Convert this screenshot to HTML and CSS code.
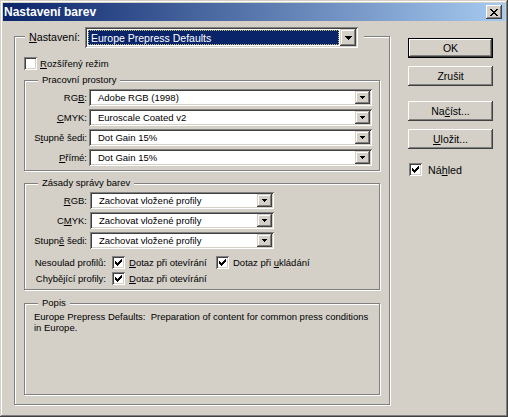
FILE: index.html
```html
<!DOCTYPE html>
<html lang="cs">
<head>
<meta charset="utf-8">
<title>Nastavení barev</title>
<link rel="stylesheet" href="styles.css">
</head>
<body>
<div class="window">
  <div class="titlebar">
    <span class="title">Nastavení barev</span>
    <span class="close"><svg width="8" height="7" viewBox="0 0 8 7" shape-rendering="crispEdges"><path d="M0 0h2v1h-2z M6 0h2v1h-2z M1 1h2v1h-2z M5 1h2v1h-2z M2 2h4v1h-4z M3 3h2v1h-2z M2 4h4v1h-4z M1 5h2v1h-2z M5 5h2v1h-2z M0 6h2v1h-2z M6 6h2v1h-2z" fill="#000"/></svg></span>
  </div>
  <div class="content">
    <fieldset class="main">
      <legend class="main-legend">
        <div class="legend-row">
          <span class="main-label"><u>N</u>astavení:</span>
          <div class="combo big">
            <span class="val"><span class="sel">Europe Prepress Defaults</span></span>
            <span class="drop"><svg width="7" height="4" viewBox="0 0 7 4" shape-rendering="crispEdges"><path d="M0 0h7v1h-7z M1 1h5v1h-5z M2 2h3v1h-3z M3 3h1v1h-1z" fill="#000"/></svg></span>
          </div>
        </div>
      </legend>

      <div class="check adv"><span class="box"></span><span><u>R</u>ozšířený režim</span></div>

      <fieldset class="group work">
        <legend>Pracovní prostory</legend>
        <div class="rows">
          <div class="row"><span class="lbl">RG<u>B</u>:</span><div class="combo"><span class="val">Adobe RGB (1998)</span><span class="drop"><svg width="5" height="3" viewBox="0 0 5 3" shape-rendering="crispEdges"><path d="M0 0h5v1h-5z M1 1h3v1h-3z M2 2h1v1h-1z" fill="#000"/></svg></span></div></div>
          <div class="row"><span class="lbl"><u>C</u>MYK:</span><div class="combo"><span class="val">Euroscale Coated v2</span><span class="drop"><svg width="5" height="3" viewBox="0 0 5 3" shape-rendering="crispEdges"><path d="M0 0h5v1h-5z M1 1h3v1h-3z M2 2h1v1h-1z" fill="#000"/></svg></span></div></div>
          <div class="row"><span class="lbl">S<u>t</u>upně šedi:</span><div class="combo"><span class="val">Dot Gain 15%</span><span class="drop"><svg width="5" height="3" viewBox="0 0 5 3" shape-rendering="crispEdges"><path d="M0 0h5v1h-5z M1 1h3v1h-3z M2 2h1v1h-1z" fill="#000"/></svg></span></div></div>
          <div class="row"><span class="lbl"><u>P</u>římé:</span><div class="combo"><span class="val">Dot Gain 15%</span><span class="drop"><svg width="5" height="3" viewBox="0 0 5 3" shape-rendering="crispEdges"><path d="M0 0h5v1h-5z M1 1h3v1h-3z M2 2h1v1h-1z" fill="#000"/></svg></span></div></div>
        </div>
      </fieldset>

      <fieldset class="group policy">
        <legend>Zásady správy barev</legend>
        <div class="rows">
          <div class="row"><span class="lbl"><u>R</u>GB:</span><div class="combo"><span class="val">Zachovat vložené profily</span><span class="drop"><svg width="5" height="3" viewBox="0 0 5 3" shape-rendering="crispEdges"><path d="M0 0h5v1h-5z M1 1h3v1h-3z M2 2h1v1h-1z" fill="#000"/></svg></span></div></div>
          <div class="row"><span class="lbl">C<u>M</u>YK:</span><div class="combo"><span class="val">Zachovat vložené profily</span><span class="drop"><svg width="5" height="3" viewBox="0 0 5 3" shape-rendering="crispEdges"><path d="M0 0h5v1h-5z M1 1h3v1h-3z M2 2h1v1h-1z" fill="#000"/></svg></span></div></div>
          <div class="row"><span class="lbl">Stupn<u>ě</u> šedi:</span><div class="combo"><span class="val">Zachovat vložené profily</span><span class="drop"><svg width="5" height="3" viewBox="0 0 5 3" shape-rendering="crispEdges"><path d="M0 0h5v1h-5z M1 1h3v1h-3z M2 2h1v1h-1z" fill="#000"/></svg></span></div></div>
        </div>
        <div class="crows">
          <div class="crow">
            <span class="clbl">Nesoulad profilů:</span>
            <span class="opt"><span class="box on"><svg width="7" height="7" viewBox="0 0 7 7" shape-rendering="crispEdges"><path d="M0 2h1v3h-1z M1 3h1v3h-1z M2 4h1v3h-1z M3 3h1v3h-1z M4 2h1v3h-1z M5 1h1v3h-1z M6 0h1v3h-1z" fill="#000"/></svg></span><span><u>D</u>otaz při otevírání</span></span>
            <span class="opt"><span class="box on"><svg width="7" height="7" viewBox="0 0 7 7" shape-rendering="crispEdges"><path d="M0 2h1v3h-1z M1 3h1v3h-1z M2 4h1v3h-1z M3 3h1v3h-1z M4 2h1v3h-1z M5 1h1v3h-1z M6 0h1v3h-1z" fill="#000"/></svg></span><span>Dotaz při <u>u</u>kládání</span></span>
          </div>
          <div class="crow">
            <span class="clbl">Chybějící profily:</span>
            <span class="opt"><span class="box on"><svg width="7" height="7" viewBox="0 0 7 7" shape-rendering="crispEdges"><path d="M0 2h1v3h-1z M1 3h1v3h-1z M2 4h1v3h-1z M3 3h1v3h-1z M4 2h1v3h-1z M5 1h1v3h-1z M6 0h1v3h-1z" fill="#000"/></svg></span><span><u>D</u>otaz při otevírání</span></span>
          </div>
        </div>
      </fieldset>

      <fieldset class="group desc">
        <legend>Popis</legend>
        <p class="desc-text">Europe Prepress Defaults:&nbsp; Preparation of content for common press conditions in Europe.</p>
      </fieldset>
    </fieldset>

    <div class="side">
      <div class="btn default">OK</div>
      <div class="btn cancel">Zrušit</div>
      <div class="btn load">Na<u>č</u>íst...</div>
      <div class="btn save"><u>U</u>ložit...</div>
      <div class="check preview"><span class="box on"><svg width="7" height="7" viewBox="0 0 7 7" shape-rendering="crispEdges"><path d="M0 2h1v3h-1z M1 3h1v3h-1z M2 4h1v3h-1z M3 3h1v3h-1z M4 2h1v3h-1z M5 1h1v3h-1z M6 0h1v3h-1z" fill="#000"/></svg></span><span>Ná<u>h</u>led</span></div>
    </div>
  </div>
</div>
</body>
</html>
```
FILE: styles.css
```css
* { box-sizing: border-box; }
html, body { margin: 0; padding: 0; }
body {
  width: 508px;
  height: 417px;
  overflow: hidden;
  background: #d4d0c8;
  font-family: "Liberation Sans", Arial, sans-serif;
  font-size: 9.5px;
  color: #000;
}
u { text-decoration: underline; text-underline-offset: 1px; }

.window {
  width: 508px;
  height: 417px;
  padding: 3px;
  background: #d4d0c8;
  box-shadow: inset -1px -1px #404040, inset 1px 1px #d4d0c8, inset -2px -2px #808080, inset 2px 2px #fff;
}

.titlebar {
  height: 18px;
  display: flex;
  align-items: center;
  justify-content: space-between;
  padding: 0 3px 0 1px;
  background: linear-gradient(to right, #0a246a, #a6caf0);
}
.title {
  color: #fff;
  font-weight: bold;
  font-size: 12px;
  line-height: 18px;
}
.close {
  width: 16px;
  height: 14px;
  display: flex;
  align-items: center;
  justify-content: center;
  background: #d4d0c8;
  box-shadow: inset -1px -1px #404040, inset 1px 1px #fff, inset -2px -2px #808080;
}
.close svg { display: block; }

.content {
  display: flex;
  align-items: flex-start;
  padding-left: 11px;
}

fieldset {
  margin: 0;
  min-inline-size: 0;
  border: 1px solid #808080;
  box-shadow: inset 1px 1px #fff, 1px 1px #fff;
}
legend { background: #d4d0c8; }

.main {
  width: 376px;
  margin-top: 6px;
  padding: 0 0 9px 9px;
}
.main-legend {
  margin-left: 1px;
  padding: 0 6px 0 4px;
}
.legend-row {
  display: flex;
  align-items: flex-start;
  height: 19px;
}
.main-label {
  width: 56px;
  font-size: 10.7px;
  line-height: 21px;
}

.combo {
  display: flex;
  align-items: stretch;
  height: 17px;
  padding: 2px;
  background: #fff;
  box-shadow: inset 1px 1px #808080, inset -1px -1px #fff, inset 2px 2px #404040, inset -2px -2px #d4d0c8;
}
.combo .val {
  flex: 1;
  display: flex;
  align-items: center;
  padding-left: 7px;
  white-space: nowrap;
  overflow: hidden;
}
.drop {
  width: 15px;
  flex: none;
  display: flex;
  align-items: center;
  justify-content: center;
  background: #d4d0c8;
  box-shadow: inset -1px -1px #404040, inset 1px 1px #d4d0c8, inset -2px -2px #808080, inset 2px 2px #fff;
}
.drop svg { display: block; }

.combo.big {
  width: 273px;
  height: 21px;
  flex: none;
}
.combo.big .val {
  padding: 1px 1px 1px 1px;
}
.combo.big .sel {
  flex: 1;
  height: 100%;
  display: flex;
  align-items: center;
  padding-left: 3px;
  background: #0a246a;
  color: #fff;
  font-size: 10.5px;
  outline: 1px dotted #c8c080;
  outline-offset: -1px;
}
.combo.big .drop { width: 16px; }

.check {
  display: flex;
  align-items: center;
  height: 13px;
}
.box {
  width: 13px;
  height: 13px;
  flex: none;
  display: flex;
  align-items: center;
  justify-content: center;
  background: #fff;
  box-shadow: inset 1px 1px #808080, inset -1px -1px #fff, inset 2px 2px #404040, inset -2px -2px #d4d0c8;
}
.box svg { display: block; }
.adv { margin-top: 11px; gap: 3px; }

.group {
  width: 356px;
  padding: 0 0 4px 0;
}
.group > legend {
  margin-left: 13px;
  padding: 0 4px;
  line-height: 12px;
}
.work { margin-top: 4px; }
.policy { margin-top: 6px; }
.desc { margin-top: 7px; height: 98px; }

.rows {
  display: flex;
  flex-direction: column;
  gap: 3px;
  margin-top: 3px;
}
.row {
  display: flex;
  align-items: center;
  height: 17px;
}
.lbl {
  width: 62px;
  text-align: right;
  white-space: nowrap;
  flex: none;
}
.work .lbl { margin-right: 2px; }
.work .combo { width: 283px; }
.policy .lbl { margin-right: 3px; }
.policy .combo { width: 184px; }

.crows {
  display: flex;
  flex-direction: column;
  gap: 3px;
  margin-top: 7px;
}
.crow {
  display: flex;
  align-items: center;
  height: 13px;
}
.clbl {
  width: 81px;
  margin-right: 6px;
  text-align: right;
  white-space: nowrap;
  flex: none;
}
.opt {
  display: flex;
  align-items: center;
  gap: 4px;
  width: 104px;
  white-space: nowrap;
  flex: none;
}

.desc-text {
  margin: 2px 0 0 9px;
  line-height: 11px;
  width: 340px;
}

.side {
  display: flex;
  flex-direction: column;
  width: 85px;
  margin-left: 18px;
  margin-top: 17px;
}
.btn {
  height: 20px;
  display: flex;
  align-items: center;
  justify-content: center;
  font-size: 10.5px;
  background: #d4d0c8;
  box-shadow: inset -1px -1px #404040, inset 1px 1px #fff, inset -2px -2px #808080;
}
.btn.default {
  border: 1px solid #000;
}
.cancel { margin-top: 8px; }
.load { margin-top: 15px; }
.save { margin-top: 8px; }
.preview {
  margin-top: 14px;
  margin-left: 1px;
  gap: 6px;
  font-size: 10.7px;
}
```
